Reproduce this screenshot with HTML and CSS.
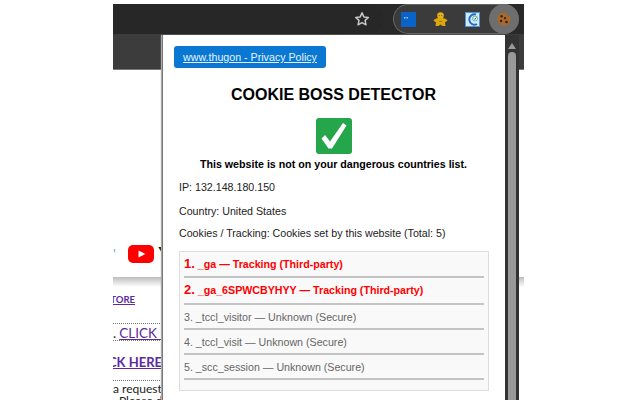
FILE: index.html
```html
<!DOCTYPE html>
<html lang="en">
<head>
<meta charset="utf-8">
<title>Cookie Boss Detector</title>
<link rel="stylesheet" href="styles.css">
</head>
<body>
<div class="window">
  <header class="toolbar">
    <div class="omnibox">
      <svg class="star" viewBox="0 0 16 16" width="16" height="16"><path d="M8 1.800l1.900 4.100 4.500.5-3.300 3 .9 4.400L8 11.600l-3.900 2.200.9-4.400-3.300-3 4.500-.5z" fill="none" stroke="#c8c8c8" stroke-width="1.500" stroke-linejoin="round"/></svg>
    </div>
    <div class="extensions">
      <svg class="ext" viewBox="0 0 15 15" width="15" height="15"><rect width="15" height="15" fill="#0a63c9"/><rect x="3" y="5" width="1.500" height="1.500" fill="#9cc4f0"/><rect x="5.500" y="5" width="1.500" height="1.500" fill="#9cc4f0"/></svg>
      <svg class="ext" viewBox="0 0 15 15" width="15" height="15"><circle cx="7.500" cy="3.500" r="3.300" fill="#e6b012"/><path d="M.5 8.500C2 6.500 4 6 7.500 6s5.500.5 7 2.500l-2.500 2 .5 3.500H9.500l-2-1.500-2 1.500h-3l.5-3.500z" fill="#dca60c"/><circle cx="6.200" cy="3.500" r=".6" fill="#7a5500"/><circle cx="8.800" cy="3.500" r=".6" fill="#7a5500"/><path d="M6 9.500h3" stroke="#a87c00"/></svg>
      <svg class="ext" viewBox="0 0 15 15" width="15" height="15"><rect width="15" height="15" fill="#4d96dc"/><rect x="1" y="1" width="13" height="13" fill="#d5e9f8"/><path d="M11 2.500a5.200 5.200 0 1 0 1 9.500" fill="none" stroke="#1f6fc4" stroke-width="2"/><circle cx="10" cy="6.500" r="2.500" fill="#f4fbff" stroke="#45a69a" stroke-width=".8"/><path d="M8.800 6.500l1 1 1.500-2" fill="none" stroke="#1c8a4a"/></svg>
      <button class="cookie-btn" type="button" aria-label="Cookie Boss">
        <svg viewBox="0 0 14 14" width="14" height="14"><path d="M7 .5c.7 0 1.300.2 1.600.9.1.9.8 1.300 1.500 1.200.2.900.9 1.400 1.800 1.300.6.300 1.600 1 1.600 2.600A6.500 6.500 0 1 1 7 .5z" fill="#a9692a"/><circle cx="4.500" cy="4.200" r="1.200" fill="#3a2210"/><circle cx="8" cy="6.200" r="1.100" fill="#3a2210"/><circle cx="4" cy="9" r="1.200" fill="#3a2210"/><circle cx="9.500" cy="10" r="1.300" fill="#3a2210"/></svg>
      </button>
    </div>
  </header>
  <div class="tabbar"></div>
  <main class="page">
    <div class="yt-row">
      <span class="blue-mark">'</span>
      <svg class="yt" viewBox="0 0 26 18" width="26" height="18"><rect width="26" height="18" rx="5" fill="#f00"/><path d="M10.500 5.500l7 3.500-7 3.500z" fill="#fff"/></svg>
      <span class="yt-word">YouTube</span>
    </div>
    <div class="shadow-band"></div>
    <div class="page-col">
      <div class="row row-store"><a class="page-link" href="#">STORE</a></div>
      <div class="row row-one">. <a class="page-link" href="#">CLICK HERE</a></div>
      <div class="row row-two"><a class="page-link" href="#">CLICK HERE</a></div>
      <div class="row row-request">a request be sent<br>. Please do not</div>
    </div>
  </main>
  <section class="popup">
    <a class="policy" href="#">www.thugon - Privacy Policy</a>
    <h1 class="title">COOKIE BOSS DETECTOR</h1>
    <div class="check">
      <svg viewBox="0 0 36 36" width="36" height="36"><rect width="36" height="36" rx="3" fill="#25a64a"/><path d="M5.500 20.500L9 17l5 6.500L27 5l3.500 2.500L16 30.500h-3.500z" fill="#fff"/></svg>
    </div>
    <p class="status">This website is not on your dangerous countries list.</p>
    <p class="info info-ip">IP: 132.148.180.150</p>
    <p class="info info-country">Country: United States</p>
    <p class="info info-cookies">Cookies / Tracking: Cookies set by this website (Total: 5)</p>
    <ol class="cookies">
      <li class="danger"><b>1.</b> _ga — Tracking (Third-party)</li>
      <li class="danger"><b>2.</b> _ga_6SPWCBYHYY — Tracking (Third-party)</li>
      <li>3. _tccl_visitor — Unknown (Secure)</li>
      <li>4. _tccl_visit — Unknown (Secure)</li>
      <li>5. _scc_session — Unknown (Secure)</li>
    </ol>
  </section>
  <div class="scrollbar">
    <span class="arrow"></span>
    <span class="thumb"></span>
  </div>
</div>
</body>
</html>
```
FILE: styles.css
```css
* { box-sizing: border-box; }
html, body { margin: 0; height: 400px; overflow: hidden; background: #fff; }
body { font-family: "Liberation Sans", Arial, sans-serif; padding-top: 4px; }

.window { position: relative; width: 411px; height: 396px; margin-left: 113px; overflow: hidden; background: #fff; }

.toolbar { display: flex; align-items: stretch; height: 30px; background: #292929; }
.omnibox { width: 270px; height: 30px; background: #272727; border-radius: 0 15px 15px 0; display: flex; align-items: center; justify-content: flex-end; padding-right: 13px; margin-right: 10px; }
.star { display: block; }
.extensions { flex: 1; display: flex; align-items: center; height: 30px; margin-right: 5px; padding-left: 7px; border: 1px solid #666; border-right: 0; border-radius: 15px; background: #3b3b3b; }
.ext { display: block; width: 15px; height: 15px; margin-right: 17px; flex: none; }
.cookie-btn { width: 30px; height: 30px; margin: 0 0 0 -8px; padding: 0; border: 0; border-radius: 50%; background: #6e6e6e; display: flex; align-items: center; justify-content: center; flex: none; }
.cookie-btn svg { display: block; }

.tabbar { height: 36px; background: #3c3c3c; border-bottom: 1px solid #777; }

.page { height: 330px; font-family: Lato, "Open Sans", sans-serif; color: #222; }
.yt-row { display: flex; align-items: center; height: 18px; margin-top: 175px; white-space: nowrap; }
.blue-mark { width: 15px; font-size: 14px; color: #6fa8dc; line-height: 18px; }
.yt { display: block; flex: none; }
.yt-word { margin-left: 4px; font-family: "Liberation Sans", sans-serif; font-size: 20px; font-weight: 700; color: #111; }
.shadow-band { height: 10px; margin-top: 14px; background: linear-gradient(#bdbdbd, #fff); }

.page-col { width: 49px; overflow: hidden; margin-top: 3px; white-space: nowrap; }
.row { display: flex; height: 20px; align-items: center; }
.page-link { color: #5b2a9d; text-decoration: underline; flex: none; }
.row-store { justify-content: flex-end; padding-right: 27px; height: 19px; margin-bottom: 14px; font-size: 9.500px; font-weight: 700; }
.row-one { height: 18px; gap: 3px; font-size: 13.500px; border-top: 1px dotted #777; border-bottom: 1px dotted #777; padding-top: 1px; }
.row-two { justify-content: flex-end; height: 39px; font-size: 13px; font-weight: 700; padding-top: 3px; }
.row-request { display: block; height: 24px; font-size: 12px; line-height: 12px; border-top: 1px dotted #777; padding-top: 2px; }

.popup { position: absolute; left: 49px; top: 31px; width: 343px; height: 365px; background: #fff; border-left: 1px solid #777; box-shadow: -1px 0 1px #aaa; padding: 11px 12px 0 11px; color: #111; }
.policy { display: block; width: 152px; height: 22px; background: #0a78d2; border-radius: 3px; color: #e6f2fb; font-size: 10.670px; line-height: 22px; text-align: center; }
.title { margin: 18px 0 0; font-size: 16px; line-height: 18px; font-weight: 700; color: #000; text-align: center; }
.check { height: 36px; margin-top: 14px; display: flex; justify-content: center; }
.check svg { display: block; }
.status { margin: 3px 0 0; font-size: 10.670px; line-height: 14px; font-weight: 700; text-align: center; color: #000; }
.info { margin: 0 0 0 5px; font-size: 10.670px; line-height: 14px; color: #222; }
.info-ip { margin-top: 9px; }
.info-country { margin-top: 10px; }
.info-cookies { margin-top: 8px; }
.cookies { list-style: none; margin: 11px 0 0 5px; width: 310px; height: 140px; padding: 0 4px 0 4px; background: #f9f9f9; border: 1px solid #ddd; font-size: 10.670px; color: #666; }
.cookies li { height: 25px; line-height: 25px; border-bottom: 2px solid #c4c4c4; }
.cookies li.danger { color: #f00; font-weight: 700; height: 27px; line-height: 23px; }
.cookies li.danger:first-child { height: 26px; }
.cookies li.danger b { font-size: 13px; }

.scrollbar { position: absolute; left: 392px; top: 31px; width: 14px; height: 365px; background: #333; display: flex; flex-direction: column; align-items: center; padding-top: 8px; }
.arrow { width: 0; height: 0; border-left: 4px solid transparent; border-right: 4px solid transparent; border-bottom: 6px solid #999; flex: none; }
.thumb { width: 8px; flex: 1; margin-top: 3px; background: #999; border-radius: 4px 4px 0 0; }
```
